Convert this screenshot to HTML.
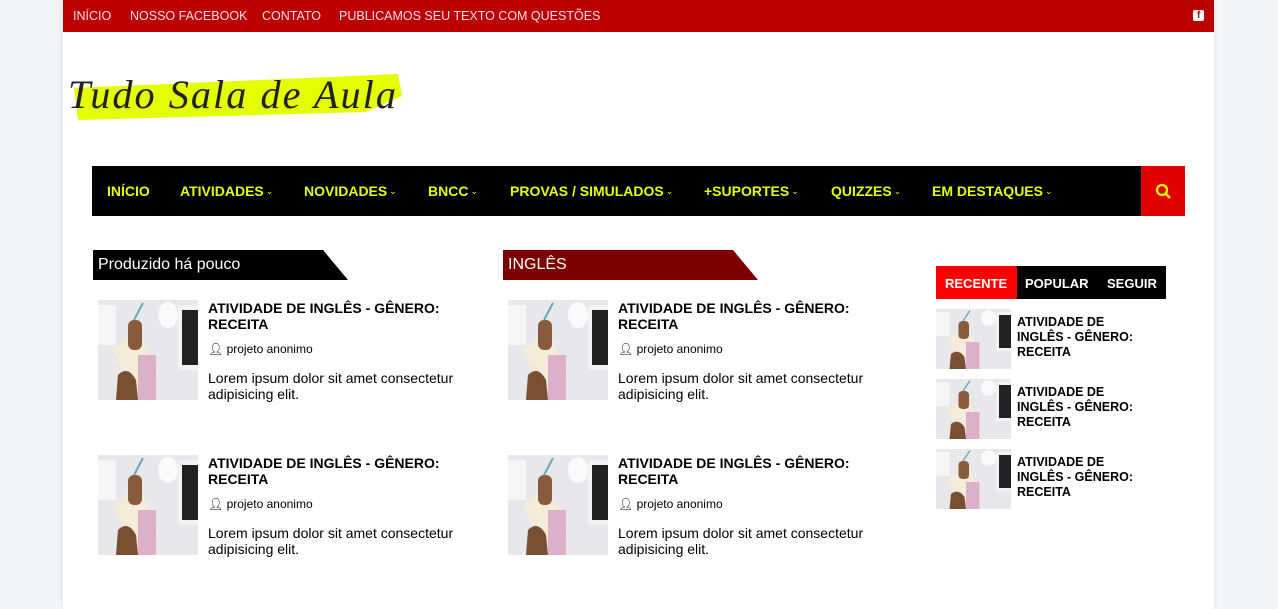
<!DOCTYPE html>
<html><head><meta charset="utf-8"><style>
*{margin:0;padding:0;box-sizing:border-box}
body{width:1278px;height:609px;background:#f4f5f7;font-family:"Liberation Sans",sans-serif;overflow:hidden;position:relative}
.page{position:absolute;left:63px;top:0;width:1151px;height:609px;background:#fff;box-shadow:0 0 8px rgba(0,0,0,.08)}
.top{height:32px;background:#bb0000;position:relative}
.top a{position:absolute;top:9px;font-size:12.5px;color:#fde;text-decoration:none}
.fb{position:absolute;right:10px;top:10px;width:11px;height:11px;background:#fff;border-radius:2px}
.fb:after{content:"f";position:absolute;left:4px;top:0;font:bold 10px "Liberation Sans";color:#b00}
.nav{position:absolute;left:29px;top:166px;width:1093px;height:50px;background:#000}
.nav span{position:absolute;top:17px;color:#e4ff00;font-weight:bold;font-size:14px}
.nav i{font-style:normal;font-size:9px;font-weight:normal;position:relative;top:-2px;margin-left:2px}
.srch{position:absolute;right:0;top:0;width:44px;height:50px;background:#e00000}
.h{position:absolute;height:30px;color:#fff;font-size:16px;padding:6px 0 0 5px}
.post{position:absolute;width:380px;height:100px}
.th{position:absolute;left:0;top:0;width:100px;height:100px}
.post .t{position:absolute;left:110px;top:0;font-weight:bold;font-size:14px;line-height:16px;color:#000;width:260px}
.post .a{position:absolute;left:110px;top:42px;font-size:12px;color:#000}
.post .d{position:absolute;left:110px;top:70px;font-size:14px;line-height:16px;color:#000;width:270px}
.tabs{position:absolute;left:873px;top:266px;height:33px;width:230px;background:#000}
.tabs span{position:absolute;top:10px;color:#fff;font-weight:bold;font-size:13px}
.sp{position:absolute;left:873px;width:240px;height:60px}
.sp .th{width:75px;height:60px}
.sp .t{position:absolute;left:81px;top:6px;font-weight:bold;font-size:12.5px;line-height:15px;width:130px}
</style></head><body>
<svg width="0" height="0" style="position:absolute"><defs>
<symbol id="img" viewBox="0 0 100 100" preserveAspectRatio="none">
<rect width="100" height="100" fill="#e8e8ea"/>
<rect x="0" y="5" width="18" height="40" fill="#f6f6f6"/>
<ellipse cx="70" cy="15" rx="10" ry="13" fill="#fafafa"/>
<rect x="80" y="5" width="22" height="65" rx="3" fill="#f3f3f3"/>
<rect x="84" y="10" width="16" height="55" fill="#222"/>
<polygon points="15,50 40,30 60,75 35,95" fill="#f4ecd8"/>
<rect x="30" y="20" width="14" height="30" rx="6" fill="#8a5a3c"/>
<rect x="40" y="55" width="18" height="45" fill="#dcb0c8"/>
<path d="M20 75 Q30 65 38 80 L40 100 L18 100Z" fill="#7a4e32"/>
<line x1="36" y1="20" x2="45" y2="3" stroke="#6ab" stroke-width="2"/>
</symbol></defs></svg>
<div class="page">
<div class="top">
<a style="left:10px">INÍCIO</a><a style="left:67px">NOSSO FACEBOOK</a><a style="left:199px">CONTATO</a><a style="left:276px">PUBLICAMOS SEU TEXTO COM QUESTÕES</a>
<div class="fb"></div></div>
<svg style="position:absolute;left:3px;top:68px" width="345" height="58">
<path d="M8 20 L332 6 L336 28 L300 44 L12 52 Z" fill="#e4ff00"/>
<text x="2" y="40" font-family="Liberation Serif" font-style="italic" font-size="40" letter-spacing="2" fill="#222" textLength="330" lengthAdjust="spacingAndGlyphs">Tudo Sala de Aula</text>
</svg>
<div class="nav">
<span style="left:15px">INÍCIO</span>
<span style="left:88px">ATIVIDADES<i>&#8964;</i></span>
<span style="left:212px">NOVIDADES<i>&#8964;</i></span>
<span style="left:336px">BNCC<i>&#8964;</i></span>
<span style="left:418px">PROVAS / SIMULADOS<i>&#8964;</i></span>
<span style="left:612px">+SUPORTES<i>&#8964;</i></span>
<span style="left:739px">QUIZZES<i>&#8964;</i></span>
<span style="left:840px">EM DESTAQUES<i>&#8964;</i></span>
<div class="srch"><svg width="44" height="50"><circle cx="21" cy="24" r="5" stroke="#e4ff00" stroke-width="2.2" fill="none"/><line x1="25" y1="28" x2="29" y2="32" stroke="#e4ff00" stroke-width="2.5"/></svg></div>
</div>
<div class="h" style="left:30px;top:250px;width:255px;background:#000;clip-path:polygon(0 0,230px 0,255px 30px,0 30px)">Produzido há pouco</div>
<div class="h" style="left:440px;top:250px;width:255px;background:#7d0000;clip-path:polygon(0 0,230px 0,255px 30px,0 30px)">INGLÊS</div>
<div class="post" style="left:35px;top:300px"><svg class="th"><use href="#img" width="100" height="100"/></svg><div class="t">ATIVIDADE DE INGLÊS - GÊNERO: RECEITA</div><div class="a">&#128100;&#xFE0E; projeto anonimo</div><div class="d">Lorem ipsum dolor sit amet consectetur adipisicing elit.</div></div>
<div class="post" style="left:445px;top:300px"><svg class="th"><use href="#img" width="100" height="100"/></svg><div class="t">ATIVIDADE DE INGLÊS - GÊNERO: RECEITA</div><div class="a">&#128100;&#xFE0E; projeto anonimo</div><div class="d">Lorem ipsum dolor sit amet consectetur adipisicing elit.</div></div>
<div class="post" style="left:35px;top:455px"><svg class="th"><use href="#img" width="100" height="100"/></svg><div class="t">ATIVIDADE DE INGLÊS - GÊNERO: RECEITA</div><div class="a">&#128100;&#xFE0E; projeto anonimo</div><div class="d">Lorem ipsum dolor sit amet consectetur adipisicing elit.</div></div>
<div class="post" style="left:445px;top:455px"><svg class="th"><use href="#img" width="100" height="100"/></svg><div class="t">ATIVIDADE DE INGLÊS - GÊNERO: RECEITA</div><div class="a">&#128100;&#xFE0E; projeto anonimo</div><div class="d">Lorem ipsum dolor sit amet consectetur adipisicing elit.</div></div>
<div class="tabs"><div style="position:absolute;left:0;top:0;width:81px;height:33px;background:#f00"></div><span style="left:9px">RECENTE</span><span style="left:89px">POPULAR</span><span style="left:171px">SEGUIR</span></div>
<div class="sp" style="top:309px"><svg class="th"><use href="#img" width="75" height="60"/></svg><div class="t">ATIVIDADE DE INGLÊS - GÊNERO: RECEITA</div></div>
<div class="sp" style="top:379px"><svg class="th"><use href="#img" width="75" height="60"/></svg><div class="t">ATIVIDADE DE INGLÊS - GÊNERO: RECEITA</div></div>
<div class="sp" style="top:449px"><svg class="th"><use href="#img" width="75" height="60"/></svg><div class="t">ATIVIDADE DE INGLÊS - GÊNERO: RECEITA</div></div>
</div>
</body></html>
